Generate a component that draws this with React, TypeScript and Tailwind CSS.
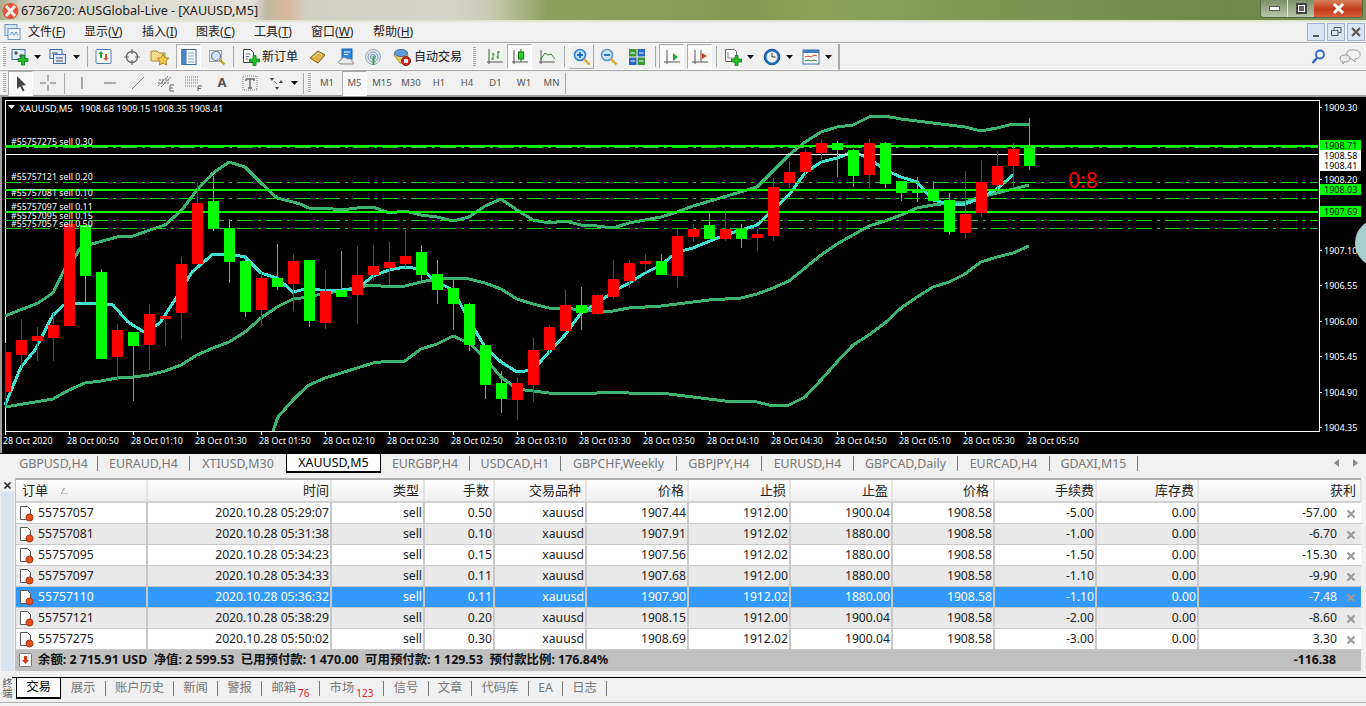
import type { ReactNode } from "react"

const C: [number, number, number, number, number][] = [
  [352, 392, 343, 406, 0], [340, 355, 319, 368, 0], [336, 341, 327, 361, 0], [325, 338, 313, 361, 0],
  [224, 326, 224, 326, 0], [225, 276, 225, 303, 1], [272, 359, 269, 359, 1], [330, 357, 324, 381, 0],
  [332, 346, 332, 401, 1], [314, 345, 304, 370, 0], [316, 319, 316, 346, 0], [264, 313, 257, 339, 0],
  [203, 264, 182, 264, 0], [201, 228, 176, 231, 1], [228, 262, 219, 283, 1], [261, 312, 255, 317, 1],
  [278, 310, 272, 326, 0], [278, 287, 244, 290, 1], [261, 284, 254, 311, 0], [260, 321, 260, 327, 1],
  [291, 323, 270, 329, 0], [290, 297, 251, 297, 1], [275, 295, 246, 324, 0], [266, 275, 245, 281, 0],
  [262, 268, 242, 285, 0], [256, 264, 230, 268, 0], [252, 275, 245, 282, 1], [274, 290, 260, 304, 1],
  [288, 304, 280, 330, 1], [304, 345, 303, 351, 1], [345, 385, 345, 399, 1], [383, 399, 371, 413, 1],
  [383, 400, 377, 420, 0], [350, 385, 338, 402, 0], [327, 350, 325, 355, 0], [305, 331, 290, 331, 0],
  [305, 313, 287, 330, 1], [295, 314, 294, 315, 0], [279, 297, 260, 299, 0], [263, 281, 260, 288, 0],
  [261, 264, 254, 272, 0], [261, 275, 254, 275, 1], [236, 276, 229, 288, 0], [229, 237, 224, 242, 0],
  [225, 239, 213, 239, 1], [229, 239, 210, 241, 0], [229, 239, 224, 248, 1], [234, 238, 229, 251, 0],
  [187, 236, 178, 241, 0], [172, 183, 161, 188, 0], [152, 172, 149, 178, 0], [143, 153, 139, 162, 0],
  [143, 150, 141, 177, 1], [150, 176, 149, 187, 1], [143, 175, 139, 190, 0], [143, 184, 142, 188, 1],
  [181, 193, 181, 201, 1], [190, 193, 177, 202, 1], [189, 201, 181, 201, 1], [200, 232, 193, 235, 1],
  [214, 233, 171, 239, 0], [182, 213, 160, 217, 0], [166, 185, 151, 190, 0], [149, 166, 143, 188, 0],
  [148, 166, 118, 170, 1],
]

const upper = "5,316 38,303 53,293 64,270 75,257 80,248 92,244 117,237 133,236 150,230 165,225 182,210 197,190 213,173 229,162 245,167 261,183 277,198 293,202 300,204 309,208 325,208 341,210 357,208 373,207 389,213 405,211 421,215 437,217 453,221 469,217 485,206 501,199 517,210 533,220 549,223 565,221 581,225 597,226 613,228 629,223 645,220 661,217 677,212 693,206 700,204 757,187 789,155 805,142 821,132 837,127 853,125 869,117 885,116 901,119 917,121 933,123 949,125 965,127 981,131 997,128 1013,124 1029,124"
const middle = "5,407 53,399 69,390 85,383 101,381 117,378 133,377 149,375 165,371 181,365 197,355 213,348 229,342 245,332 261,318 277,307 293,299 309,297 325,293 341,291 357,287 373,285 389,287 405,286 421,282 437,279 453,278 469,279 485,283 501,289 517,299 533,304 549,308 565,308 581,310 597,311 613,311 629,308 645,307 661,306 677,304 693,302 709,300 725,299 741,298 757,294 773,288 789,281 805,268 821,255 837,244 853,235 869,226 885,221 901,215 917,208 933,205 949,203 965,202 981,197 997,193 1013,189 1029,185"
const lower = "273,431 278,417 293,400 300,393 309,385 325,378 341,373 357,368 373,363 389,361 405,361 421,349 437,344 453,336 469,343 485,358 501,377 517,389 533,391 549,393 565,393 581,393 597,393 613,392 629,393 645,393 661,393 677,395 693,397 709,399 725,401 741,401 757,402 773,406 789,405 805,397 821,380 837,362 853,345 869,335 885,323 901,308 917,297 933,287 949,282 965,274 981,262 997,257 1013,253 1029,246"
const ma = "5,405 21,367 35,350 53,315 64,305 80,303 95,303 113,305 128,322 144,332 160,323 176,298 192,272 213,254 229,254 245,257 261,273 277,278 293,292 309,288 325,291 341,290 357,289 373,276 389,270 405,267 421,269 437,282 453,290 469,320 485,347 501,362 517,372 533,370 549,352 565,335 581,313 597,303 613,292 629,283 645,273 661,265 677,252 693,248 700,245 725,235 757,225 773,210 789,195 805,173 821,162 837,158 853,152 869,158 885,170 901,177 917,182 933,200 949,204 965,204 981,198 997,189 1013,175"

const times = ["28 Oct 2020", "28 Oct 00:50", "28 Oct 01:10", "28 Oct 01:30", "28 Oct 01:50", "28 Oct 02:10", "28 Oct 02:30", "28 Oct 02:50", "28 Oct 03:10", "28 Oct 03:30", "28 Oct 03:50", "28 Oct 04:10", "28 Oct 04:30", "28 Oct 04:50", "28 Oct 05:10", "28 Oct 05:30", "28 Oct 05:50"]
const axis: [string, number][] = [["1909.30", 111], ["1908.20", 183], ["1907.10", 254], ["1906.55", 289], ["1906.00", 325], ["1905.45", 360], ["1904.90", 396], ["1904.35", 431]]
const orderLabels: [string, number][] = [["#55757275 sell 0.30", 145], ["#55757121 sell 0.20", 180], ["#55757081 sell 0.10", 196], ["#55757097 sell 0.11", 210], ["#55757095 sell 0.15", 219], ["#55757057 sell 0.50", 227]]
const solid = [146, 190, 212]
const dashed = [147, 182, 198, 220, 228]
const greenBoxes: [string, number, number][] = [["1908.71", 140, 10], ["1908.03", 184, 11], ["1907.69", 206, 11]]

const Chart = () => (
  <svg width="1366" height="356" viewBox="0 97 1366 356" className="block shrink-0 bg-black" fontFamily="'Noto Sans', sans-serif" fontSize="8.9">
    <rect x="0" y="97" width="2" height="356" fill="#a0a0a0" />
    <rect x="5" y="100" width="1314" height="331.5" fill="none" stroke="#fff" strokeWidth="1" shapeRendering="crispEdges" />
    <g fill="none" strokeWidth="3" shapeRendering="crispEdges">
      <polyline points={upper} stroke="#3cb371" />
      <polyline points={middle} stroke="#3cb371" />
      <polyline points={lower} stroke="#3cb371" />
      <polyline points={ma} stroke="#40e0d0" />
    </g>
    <line x1="5" x2="1318" y1="154.5" y2="154.5" stroke="#fff" shapeRendering="crispEdges" />
    {solid.map((y) => (
      <rect key={y} x="5" y={y - 1} width="1313" height="2" fill="#00ff00" />
    ))}
    {dashed.map((y) => (
      <line key={y} x1="5" x2="1318" y1={y + 0.5} y2={y + 0.5} stroke="#1fd01f" strokeDasharray="16 5 3 5" shapeRendering="crispEdges" />
    ))}
    {C.map(([top, bottom, wickTop, wickBottom, up], i) => (
      <g key={i} shapeRendering="crispEdges" fill={up ? "#00ff00" : "#ff0000"}>
        <rect x={Math.max(16 * i + 5, 5)} y={wickTop} width="1" height={wickBottom - wickTop} />
        <rect x={Math.max(16 * i, 5)} y={top} width={i === 0 ? 6 : 11} height={bottom - top} />
      </g>
    ))}
    <path d="M8 105h7l-3.500 4z" fill="#fff" />
    <text x="19.500" y="111.500" fill="#fff" fontSize="9.400">XAUUSD,M5</text>
    <text x="80" y="111.500" fill="#fff" fontSize="9.200">1908.68 1909.15 1908.35 1908.41</text>
    {orderLabels.map(([t, y]) => (
      <text key={t} x="11" y={y} fill="#fff" fontSize="8.800">{t}</text>
    ))}
    <text x="1068" y="188" fill="#ff0000" fontSize="21">0:8</text>
    {times.map((t, i) => (
      <g key={t}>
        <line x1={5.500 + 64 * i} x2={5.500 + 64 * i} y1="431" y2="435" stroke="#fff" />
        <text x={3 + 64 * i} y="444" fill="#fff">{t}</text>
      </g>
    ))}
    {axis.map(([t, y]) => (
      <g key={t}>
        <line x1="1319" x2="1322" y1={y - 3.500} y2={y - 3.500} stroke="#fff" />
        <text x="1324" y={y} fill="#fff" fontSize="9">{t}</text>
      </g>
    ))}
    <rect x="1320" y="150" width="41" height="21" fill="#fff" />
    <text x="1324" y="159" fill="#000" fontSize="9">1908.58</text>
    <text x="1324" y="169" fill="#000" fontSize="9">1908.41</text>
    {greenBoxes.map(([t, y, h]) => (
      <g key={t}>
        <rect x="1320" y={y} width="41" height={h} fill="#00ff00" />
        <text x="1324" y={y + 8.500} fill="#000" fontSize="9">{t}</text>
      </g>
    ))}
    <circle cx="1379" cy="243" r="24" fill="#a6d0cc" />
  </svg>
)

const PlusMark = ({ x = 0, y = 0 }: { x?: number; y?: number }) => (
  <path transform={`translate(${x} ${y})`} d="M3.500 0h3v3.500h3.500v3h-3.500v3.500h-3v-3.500h-3.500v-3h3.500z" fill="#22c02a" stroke="#0b7a14" strokeWidth="0.800" />
)

const Ico = ({ children, w = 18, h = 18 }: { children: ReactNode; w?: number; h?: number }) => (
  <svg width={w} height={h} viewBox={`0 0 ${w} ${h}`}>{children}</svg>
)

const NewChartIcon = () => (
  <Ico>
    <rect x="1" y="1.500" width="13" height="10" fill="#e4eefa" stroke="#3f6ea8" />
    <path d="M3 5h4M5 3v4M8 8h4M10 6v4" stroke="#333" fill="none" />
    <PlusMark x={7} y={7} />
  </Ico>
)
const ProfileIcon = () => (
  <Ico>
    <rect x="1" y="1.500" width="12" height="9" fill="#e4eefa" stroke="#3f6ea8" />
    <rect x="4.500" y="6.500" width="12" height="9" fill="#dbe8f8" stroke="#3f6ea8" />
    <path d="M3 5h6M7 10h7M7 13h7" stroke="#555" />
  </Ico>
)
const ArrowsIcon = () => (
  <Ico>
    <rect x="1" y="1.500" width="15" height="14" rx="1" fill="#fff" stroke="#4a7fbb" />
    <path d="M5 10V6H3.500L6 3l2.500 3H7v4z" fill="#27a534" />
    <path d="M10 6v4H8.500l2.500 3 2.500-3H12V6z" fill="#e2502e" />
  </Ico>
)
const CrossCircleIcon = () => (
  <Ico>
    <circle cx="9" cy="9" r="5.500" fill="none" stroke="#666" strokeWidth="1.400" />
    <path d="M9 1v5M9 12v5M1 9h5M12 9h5" stroke="#666" strokeWidth="1.200" />
  </Ico>
)
const FolderStarIcon = () => (
  <Ico w={20}>
    <path d="M1 3h6l2 2h6v8H1z" fill="#f6dc8a" stroke="#a88a2c" />
    <path d="M13 6l1.800 3.600 4 .6-2.900 2.800.7 4-3.600-1.900-3.600 1.900.7-4-2.900-2.800 4-.6z" fill="#f5cc4a" stroke="#a8862c" />
  </Ico>
)
const NavigatorIcon = () => (
  <Ico>
    <rect x="2" y="1.500" width="14" height="15" fill="#fff" stroke="#3a6ca8" />
    <rect x="2" y="1.500" width="4" height="15" fill="#4d8ad0" stroke="#3a6ca8" />
    <path d="M8 5h6M8 8h6M8 11h6M8 14h6" stroke="#7aa0c8" />
  </Ico>
)
const DocSearchIcon = () => (
  <Ico>
    <rect x="1.500" y="2.500" width="12" height="11" fill="#eee" stroke="#9aa" />
    <circle cx="8" cy="8" r="4.500" fill="#cfe2f5" stroke="#778" strokeWidth="1.200" />
    <path d="M11.500 11.500l5 5" stroke="#c59a2e" strokeWidth="2.200" />
  </Ico>
)
const NewOrderIcon = () => (
  <Ico>
    <path d="M1.500 1.500h7l3 3v10h-10z" fill="#fff" stroke="#444" />
    <path d="M3.500 6h5M3.500 8.500h4M3.500 11h3" stroke="#777" />
    <PlusMark x={7.500} y={7.500} />
  </Ico>
)
const GoldIcon = () => (
  <Ico>
    <path d="M1 10l8-7 7 4-7 8z" fill="#e0b04a" stroke="#7a5a18" />
    <path d="M4 9l5-4 4 2" fill="none" stroke="#f6e2a4" />
  </Ico>
)
const CloudDocIcon = () => (
  <Ico>
    <rect x="4" y="1" width="10" height="10" fill="#2f86d8" stroke="#1a5fa8" />
    <path d="M6 4h6M6 6.500h4" stroke="#fff" />
    <path d="M3 16c-3 0-3-4 0-4 1-3 5-3 6-1 3-1 6 1 5 3 2 0 2 2 1 2z" fill="#e8e8e8" stroke="#888" />
  </Ico>
)
const SignalIcon = () => (
  <Ico>
    <circle cx="9" cy="9" r="7.500" fill="#dde8ee" stroke="#9ab" />
    <circle cx="9" cy="9" r="5" fill="none" stroke="#7a9ab8" />
    <circle cx="9" cy="9" r="2.500" fill="none" stroke="#6a8aa8" />
    <path d="M9.500 8v9" stroke="#3aa648" strokeWidth="2" />
  </Ico>
)
const AutoTradeIcon = () => (
  <Ico>
    <path d="M1 7c0-5 14-5 14 0l-6 8H7z" fill="#f3cf55" stroke="#a8862c" />
    <ellipse cx="8" cy="5" rx="6.500" ry="3.500" fill="#5f9bd6" stroke="#3a6ca8" />
    <circle cx="13" cy="13" r="4.500" fill="#d9261c" stroke="#8b1510" />
    <rect x="11" y="11" width="4" height="4" fill="#fff" />
  </Ico>
)
const BarChartIcon = () => (
  <Ico>
    <path d="M3 1v15M1 14h16" stroke="#555" />
    <path d="M7 5v7M5.500 11H7M7 6h1.500M12 3v8M10.500 9H12M12 4h1.500" stroke="#1e7a1e" fill="none" />
  </Ico>
)
const CandleChartIcon = () => (
  <Ico>
    <path d="M3 2v14M1 14h16" stroke="#555" />
    <path d="M10 1v13" stroke="#0a7a0a" />
    <rect x="7.500" y="4" width="5" height="7" fill="#22d322" stroke="#0a7a0a" />
  </Ico>
)
const LineChartIcon = () => (
  <Ico>
    <path d="M3 2v14M1 14h16" stroke="#555" />
    <path d="M3 11l4-6 3 2 3-1 4 5" stroke="#2a8a2a" fill="none" />
  </Ico>
)
const ZoomInIcon = () => (
  <Ico>
    <circle cx="7" cy="7" r="5.500" fill="#bfe0fa" stroke="#2d7fd0" strokeWidth="1.600" />
    <path d="M4 7h6M7 4v6" stroke="#1a6ac0" strokeWidth="1.800" />
    <path d="M11 11l5.500 5.500" stroke="#d8a832" strokeWidth="2.400" />
  </Ico>
)
const ZoomOutIcon = () => (
  <Ico>
    <circle cx="7" cy="7" r="5.500" fill="#cfe6f8" stroke="#5a96c8" strokeWidth="1.600" />
    <path d="M4 7h6" stroke="#1a6ac0" strokeWidth="1.800" />
    <path d="M11 11l5.500 5.500" stroke="#d8a832" strokeWidth="2.400" />
  </Ico>
)
const TileIcon = () => (
  <Ico>
    <rect x="1" y="1" width="7.500" height="7.500" fill="#3a9a34" />
    <rect x="9.500" y="1" width="7.500" height="7.500" fill="#2a66c8" />
    <rect x="1" y="9.500" width="7.500" height="7.500" fill="#2a66c8" />
    <rect x="9.500" y="9.500" width="7.500" height="7.500" fill="#3a9a34" />
    <path d="M2.500 5h4.500M11 5h4.500M2.500 13h4.500M11 13h4.500" stroke="#fff" />
  </Ico>
)
const ScrollIcon = () => (
  <Ico>
    <path d="M4 2v14M1 14h16" stroke="#555" />
    <path d="M10 5v8l5-4z" fill="#2aa52a" />
  </Ico>
)
const ShiftIcon = () => (
  <Ico>
    <path d="M4 2v14M1 14h16M10 2v12" stroke="#555" />
    <path d="M16 8l-5-3v6z" fill="#c8401e" />
  </Ico>
)
const IndicatorIcon = () => (
  <Ico>
    <path d="M1.500 1.500h9l2 2v10h-11z" fill="#fff" stroke="#666" />
    <path d="M4 4v6h6" stroke="#888" fill="none" />
    <PlusMark x={7.500} y={7.500} />
  </Ico>
)
const ClockIcon = () => (
  <Ico>
    <circle cx="9" cy="9" r="7.800" fill="#1d6fc4" stroke="#134f90" />
    <circle cx="9" cy="9" r="5.500" fill="#f0f0f0" />
    <path d="M9 5v4h3.500" stroke="#333" fill="none" />
  </Ico>
)
const TemplateIcon = () => (
  <Ico>
    <rect x="1" y="2" width="16" height="14" fill="#fff" stroke="#3a6ca8" />
    <rect x="1" y="2" width="16" height="3" fill="#3a7ac8" />
    <path d="M3 9l3-1 3 1 3-2 3 1" stroke="#c8401e" fill="none" />
    <path d="M3 13l3-1 3 1 3-1 3 1" stroke="#2a8a2a" fill="none" />
  </Ico>
)
const CursorIcon = () => (
  <Ico>
    <path d="M5 2l9 9-4 .5 2.500 5-1.800.8-2.500-5L5 15z" fill="#444" />
  </Ico>
)
const CrosshairIcon = () => (
  <Ico>
    <path d="M9 1v6M9 11v6M1 9h6M11 9h6" stroke="#666" />
  </Ico>
)
const VLineIcon = () => (
  <Ico>
    <path d="M9 3v12" stroke="#666" />
  </Ico>
)
const HLineIcon = () => (
  <Ico>
    <path d="M3 9h12" stroke="#666" />
  </Ico>
)
const TrendIcon = () => (
  <Ico>
    <path d="M3 15L15 3" stroke="#777" />
  </Ico>
)
const FibEIcon = () => (
  <Ico w={20}>
    <path d="M2 12L12 2M2 9h11M3 6h10M5 13L15 3" stroke="#666" strokeDasharray="2 1" fill="none" />
    <path d="M14 11h4M14 11v6M14 14h3M14 17h4" stroke="#666" fill="none" />
  </Ico>
)
const FibFIcon = () => (
  <Ico w={20}>
    <path d="M1 3h14M1 6h14M1 9h14M1 12h11" stroke="#777" strokeDasharray="1 1" />
    <path d="M14 12h4M14 12v5M14 14.500h3" stroke="#666" fill="none" />
  </Ico>
)
const TextTIcon = () => (
  <Ico>
    <rect x="2" y="2" width="14" height="14" fill="none" stroke="#777" strokeDasharray="1 1" />
    <path d="M5 5h8v2M5 5v2M9 5v9M7 14h4" stroke="#666" strokeWidth="1.400" fill="none" />
  </Ico>
)
const ArrowMarksIcon = () => (
  <Ico>
    <path d="M3 4h4l-2 3zM12 9h4l-2-3zM8 13h4l-2 3z" fill="#444" />
    <path d="M7 7l3 3" stroke="#666" />
  </Ico>
)
const SearchIcon = () => (
  <Ico w={14} h={16}>
    <circle cx="9" cy="5.500" r="4" fill="none" stroke="#2b62c8" strokeWidth="1.800" />
    <path d="M6 9l-4.500 5" stroke="#2b62c8" strokeWidth="2.400" />
  </Ico>
)
const ChatIcon = () => (
  <Ico w={22} h={16}>
    <path d="M8 3c1-3 12-3 13 1 1 4-2 6-5 6v3l-3-3c-3 0-6-3-5-7z" fill="#f1f1f1" stroke="#999" />
    <path d="M1 9c0-4 10-4 10 0s-4 4-6 4l-1 2v-2c-2 0-3-2-3-4z" fill="#e9e9e9" stroke="#999" />
  </Ico>
)
const MenuDocIcon = () => (
  <Ico>
    <rect x="1" y="1.500" width="12" height="11" fill="#d8e8f8" stroke="#6a94c8" />
    <rect x="4" y="5.500" width="12" height="11" fill="#eef5fc" stroke="#6a94c8" />
    <path d="M6 12l2-3 2 3 2-3 2 3" stroke="#5a8ac0" fill="none" />
  </Ico>
)
const OrderDocIcon = () => (
  <svg width="16" height="17" viewBox="0 0 16 17" className="shrink-0">
    <path d="M1.500 1.500h7l3 3v10h-10z" fill="#fff" stroke="#555" />
    <circle cx="10.500" cy="12.500" r="3.500" fill="#e2501c" stroke="#a83210" />
  </svg>
)

const Caret = () => (
  <svg width="7" height="4" viewBox="0 0 7 4">
    <path d="M0 0h7L3.500 4z" fill="#111" />
  </svg>
)

type CellKind = "none" | "active" | "raised"

const Cell = ({ className, kind = "none", children }: { className: string; kind?: CellKind; children?: ReactNode }) => (
  <div
    className={`flex h-[25px] shrink-0 items-center justify-center ${className} ${
      kind === "active"
        ? "border border-b-white border-l-[#ababab] border-r-white border-t-[#ababab] bg-[#f8f8f8]"
        : kind === "raised"
          ? "border border-b-[#a8a8a8] border-l-white border-r-[#a8a8a8] border-t-white"
          : ""
    }`}
  >
    {children}
  </div>
)

const Sep = ({ className }: { className: string }) => (
  <div className={`flex h-[25px] shrink-0 items-center justify-center ${className}`}>
    <div className="h-[21px] w-px bg-[#a8a8a8]" />
  </div>
)

const Grip = ({ className }: { className: string }) => (
  <div className={`flex h-[25px] shrink-0 items-center justify-center ${className}`}>
    <div className="h-[20px] w-[3px] bg-[repeating-linear-gradient(180deg,#a8a8a8_0,#a8a8a8_1px,#f0f0f0_1px,#f0f0f0_2px)]" />
  </div>
)

const TopBar = () => (
  <div className="flex h-[22px] shrink-0 items-start justify-between border-b-2 border-b-[#dfe5cf] bg-[linear-gradient(90deg,#a9ac86_0%,#d8d8cc_1.500%,#e2e1da_18.500%,#bfb9a5_19.500%,#dcb79a_21%,#cfcfc6_22.500%,#d4d4cc_33%,#c8c9b0_36%,#8fa05e_40%,#86984f_55%,#8ea258_60%,#7d9450_75%,#6f8748_90%,#7d8f58_100%)]">
    <div className="flex items-center">
      <svg width="18" height="18" viewBox="0 0 18 18" className="ml-[2px] mt-[1px]">
        <circle cx="8.500" cy="9" r="8" fill="#e2543e" />
        <path d="M4 4l9 10M13 4L4 14" stroke="#f5efe6" strokeWidth="3" />
      </svg>
      <span className="ml-[1px] mt-[2px] text-[12.600px] leading-[18px] text-[#1c1c1c]">6736720: AUSGlobal-Live - [XAUUSD,M5]</span>
    </div>
    <div className="mr-[3px] flex h-[18px] overflow-hidden rounded-b-[4px] border border-t-0 border-[#5a6a48]">
      <div className="flex w-[27px] items-center justify-center border-r border-[#e5e8da] bg-[linear-gradient(180deg,#7f8f68,#b8c4a8)]">
        <div className="h-[5px] w-[11px] border border-[#555] bg-white" />
      </div>
      <div className="flex w-[26px] items-center justify-center bg-[linear-gradient(180deg,#7f8f68,#b8c4a8)]">
        <div className="flex h-[11px] w-[11px] items-center justify-center border-2 border-[#444] bg-white">
          <div className="h-[5px] w-[5px] bg-[#666]" />
        </div>
      </div>
      <div className="flex w-[48px] items-center justify-center bg-[linear-gradient(180deg,#d9805a,#c23a1a_55%,#d8603a)]">
        <svg width="13" height="11" viewBox="0 0 13 11">
          <path d="M2 1l9 9M11 1l-9 9" stroke="#fff" strokeWidth="3" />
        </svg>
      </div>
    </div>
  </div>
)

const menus: [string, string, string][] = [
  ["文件", "F", "w-[56px]"],
  ["显示", "V", "w-[58px]"],
  ["插入", "I", "w-[54px]"],
  ["图表", "C", "w-[58px]"],
  ["工具", "T", "w-[57px]"],
  ["窗口", "W", "w-[62px]"],
  ["帮助", "H", "w-[60px]"],
]

const MenuBar = () => (
  <div className="flex h-[21px] shrink-0 items-center justify-between border-b border-b-[#a8a8a8] bg-[#f0f0f0]">
    <div className="flex items-center text-[12px] text-[#222]">
      <div className="flex w-[28px] items-center justify-center pr-[2px]">
        <MenuDocIcon />
      </div>
      {menus.map(([t, k, w]) => (
        <div key={t} className={`${w} shrink-0`}>
          {t}(<span className="underline">{k}</span>)
        </div>
      ))}
    </div>
    <div className="mr-[1px] flex gap-[2px]">
      {["min", "restore", "close"].map((b) => (
        <div key={b} className="flex h-[18px] w-[18px] items-center justify-center border border-[#9fb4cf] bg-[#d8e6f4]">
          <svg width="12" height="12" viewBox="0 0 12 12">
            {b === "min" && <path d="M3 10h6" stroke="#555" strokeWidth="2" />}
            {b === "restore" && <path d="M4 3.500V1.500h7v5H8.500M1.500 4.500h6.500v5H1.500z" fill="none" stroke="#555" />}
            {b === "close" && <path d="M2 2l8 8M10 2l-8 8" stroke="#555" strokeWidth="2" />}
          </svg>
        </div>
      ))}
    </div>
  </div>
)

const ToolbarOne = () => (
  <div className="flex h-[27px] shrink-0 items-center justify-between border-t border-t-white bg-[#f0f0f0]">
    <div className="flex h-[26px] items-center border-b border-r-2 border-b-white border-r-[#a8a8a8] bg-[#f0f0f0]">
      <Grip className="w-[8px]" />
      <Cell className="w-[24px]"><NewChartIcon /></Cell>
      <Cell className="w-[10px]"><Caret /></Cell>
      <div className="w-[4px]" />
      <Cell className="w-[24px]"><ProfileIcon /></Cell>
      <Cell className="w-[12px]"><Caret /></Cell>
      <Sep className="w-[10px]" />
      <Cell className="w-[24px]"><ArrowsIcon /></Cell>
      <Cell className="w-[32px]"><CrossCircleIcon /></Cell>
      <Cell className="w-[24px]"><FolderStarIcon /></Cell>
      <div className="w-[4px]" />
      <Cell className="w-[25px]" kind="active"><NavigatorIcon /></Cell>
      <div className="w-[4px]" />
      <Cell className="w-[24px]"><DocSearchIcon /></Cell>
      <Sep className="w-[8px]" />
      <Cell className="w-[65px] justify-start gap-[2px] pl-[5px] text-[12px] text-[#111]">
        <NewOrderIcon />
        <span className="shrink-0">新订单</span>
      </Cell>
      <Cell className="w-[31px]"><GoldIcon /></Cell>
      <Cell className="w-[28px]"><CloudDocIcon /></Cell>
      <Cell className="w-[24px]"><SignalIcon /></Cell>
      <Cell className="w-[81px] justify-start gap-[3px] pl-[8px] text-[12px] text-[#111]">
        <AutoTradeIcon />
        <span className="shrink-0">自动交易</span>
      </Cell>
      <div className="w-[4px]" />
      <Grip className="w-[8px]" />
      <div className="w-[5px]" />
      <Cell className="w-[24px]"><BarChartIcon /></Cell>
      <Cell className="w-[25px]" kind="active"><CandleChartIcon /></Cell>
      <Cell className="w-[30px]"><LineChartIcon /></Cell>
      <Sep className="w-[5px]" />
      <div className="w-[2px]" />
      <Cell className="w-[25px]" kind="raised"><ZoomInIcon /></Cell>
      <Cell className="w-[29px]"><ZoomOutIcon /></Cell>
      <Cell className="w-[28px]"><TileIcon /></Cell>
      <Sep className="w-[8px]" />
      <Cell className="w-[25px]" kind="active"><ScrollIcon /></Cell>
      <div className="w-[3px]" />
      <Cell className="w-[25px]" kind="active"><ShiftIcon /></Cell>
      <Sep className="w-[8px]" />
      <Cell className="w-[26px]"><IndicatorIcon /></Cell>
      <Cell className="w-[8px]"><Caret /></Cell>
      <div className="w-[9px]" />
      <Cell className="w-[18px]"><ClockIcon /></Cell>
      <Cell className="w-[16px]"><Caret /></Cell>
      <div className="w-[5px]" />
      <Cell className="w-[18px]"><TemplateIcon /></Cell>
      <Cell className="w-[16px]"><Caret /></Cell>
      <div className="w-[2px]" />
    </div>
    <div className="mr-[5px] flex items-center gap-[14px]">
      <SearchIcon />
      <ChatIcon />
    </div>
  </div>
)

const periods: [string, string, CellKind][] = [
  ["M1", "w-[30px]", "none"],
  ["M5", "w-[25px]", "active"],
  ["M15", "w-[30px]", "none"],
  ["M30", "w-[28px]", "none"],
  ["H1", "w-[28px]", "none"],
  ["H4", "w-[28px]", "none"],
  ["D1", "w-[29px]", "none"],
  ["W1", "w-[28px]", "none"],
  ["MN", "w-[27px]", "none"],
]

const ToolbarTwo = () => (
  <div className="flex h-[27px] shrink-0 items-center border-b-2 border-t border-b-[#9a9a9a] border-t-[#a8a8a8] bg-[#f0f0f0]">
    <Grip className="w-[8px]" />
    <Cell className="w-[25px]" kind="active"><CursorIcon /></Cell>
    <div className="w-[3px]" />
    <Cell className="w-[24px]"><CrosshairIcon /></Cell>
    <Sep className="w-[8px]" />
    <Cell className="w-[28px]"><VLineIcon /></Cell>
    <Cell className="w-[28px]"><HLineIcon /></Cell>
    <Cell className="w-[28px]"><TrendIcon /></Cell>
    <Cell className="w-[28px]"><FibEIcon /></Cell>
    <Cell className="w-[28px]"><FibFIcon /></Cell>
    <Cell className="w-[28px] text-[13px] font-bold text-[#555]">A</Cell>
    <Cell className="w-[28px]"><TextTIcon /></Cell>
    <Cell className="w-[24px]"><ArrowMarksIcon /></Cell>
    <Cell className="w-[12px]"><Caret /></Cell>
    <Sep className="w-[6px]" />
    <Grip className="w-[6px]" />
    {periods.map(([t, w, k]) => (
      <Cell key={t} className={`${w} text-[9.500px] text-[#555]`} kind={k}>{t}</Cell>
    ))}
    <Sep className="w-[1px]" />
  </div>
)

const chartTabs: [string, string][] = [
  ["GBPUSD,H4", "w-[88px]"],
  ["EURAUD,H4", "w-[92px]"],
  ["XTIUSD,M30", "w-[96px]"],
  ["XAUUSD,M5", "w-[95px]"],
  ["EURGBP,H4", "w-[89px]"],
  ["USDCAD,H1", "w-[91px]"],
  ["GBPCHF,Weekly", "w-[116px]"],
  ["GBPJPY,H4", "w-[85px]"],
  ["EURUSD,H4", "w-[92px]"],
  ["GBPCAD,Daily", "w-[104px]"],
  ["EURCAD,H4", "w-[92px]"],
  ["GDAXI,M15", "w-[88px]"],
]

const ChartTabs = () => (
  <div className="flex h-[21px] shrink-0 items-start justify-between border-t border-t-black bg-[#f0f0f0] pl-[2px]">
    <div className="flex h-[19px] items-center text-[12.400px] text-[#777]">
      <div className="w-[8px]" />
      {chartTabs.map(([t, w]) =>
        t === "XAUUSD,M5" ? (
          <div key={t} className={`${w} flex h-[19px] shrink-0 items-center justify-center border-x border-b-2 border-black bg-white pt-[1px] text-black`}>
            {t}
          </div>
        ) : (
          <div key={t} className={`${w} flex h-[15px] shrink-0 items-center justify-center pt-[1px] ${t === "XTIUSD,M30" ? "" : "border-r border-[#777]"}`}>
            {t}
          </div>
        ),
      )}
    </div>
    <div className="mr-[8px] mt-[5px] flex gap-[14px]">
      <svg width="5" height="8" viewBox="0 0 5 8"><path d="M5 0v8L0 4z" fill="#8a8a8a" /></svg>
      <svg width="5" height="8" viewBox="0 0 5 8"><path d="M0 0v8l5-4z" fill="#8a8a8a" /></svg>
    </div>
  </div>
)

const columns = "grid grid-cols-[132px_184px_93px_70px_92px_102px_102px_102px_102px_102px_102px_163px]"
const headers: [string, string][] = [
  ["时间", "pr-[1px]"],
  ["类型", "pr-[4px]"],
  ["手数", "pr-[4px]"],
  ["交易品种", "pr-[4px]"],
  ["价格", "pr-[3px]"],
  ["止损", "pr-[3px]"],
  ["止盈", "pr-[3px]"],
  ["价格", "pr-[4px]"],
  ["手续费", "pr-[1px]"],
  ["库存费", "pr-[3px]"],
  ["获利", "pr-[4px]"],
]

const rows = [
  ["55757057", "2020.10.28 05:29:07", "sell", "0.50", "xauusd", "1907.44", "1912.00", "1900.04", "1908.58", "-5.00", "0.00", "-57.00"],
  ["55757081", "2020.10.28 05:31:38", "sell", "0.10", "xauusd", "1907.91", "1912.02", "1880.00", "1908.58", "-1.00", "0.00", "-6.70"],
  ["55757095", "2020.10.28 05:34:23", "sell", "0.15", "xauusd", "1907.56", "1912.02", "1880.00", "1908.58", "-1.50", "0.00", "-15.30"],
  ["55757097", "2020.10.28 05:34:33", "sell", "0.11", "xauusd", "1907.68", "1912.00", "1880.00", "1908.58", "-1.10", "0.00", "-9.90"],
  ["55757110", "2020.10.28 05:36:32", "sell", "0.11", "xauusd", "1907.90", "1912.02", "1880.00", "1908.58", "-1.10", "0.00", "-7.48"],
  ["55757121", "2020.10.28 05:38:29", "sell", "0.20", "xauusd", "1908.15", "1912.00", "1900.04", "1908.58", "-2.00", "0.00", "-8.60"],
  ["55757275", "2020.10.28 05:50:02", "sell", "0.30", "xauusd", "1908.69", "1912.02", "1900.04", "1908.58", "-3.00", "0.00", "3.30"],
]

const rowColors = ["bg-white text-[#222]", "bg-[#e9e9e9] text-[#222]", "bg-white text-[#222]", "bg-[#e9e9e9] text-[#222]", "bg-[#3399ff] text-white", "bg-[#e9e9e9] text-[#222]", "bg-white text-[#222]"]

const OrderTable = () => (
  <div className="w-[1346px] border-l border-l-[#c0c0c0] text-[12.200px]">
    <div className={`${columns} h-[25px] border-b-2 border-t-2 border-b-[#d0d0d0] border-t-[#b0b0b0] bg-[linear-gradient(180deg,#fdfdfd,#f0f0f0)] text-[13px] text-[#222]`}>
      <div className="flex items-center border-r-2 border-r-[#e4e4e4] pl-[6px]">
        订单
        <svg width="7" height="6" viewBox="0 0 7 6" className="ml-[13px]">
          <path d="M3.500 0L0 6h7" fill="none" stroke="#999" />
        </svg>
      </div>
      {headers.map(([h, pad], i) => (
        <div key={i} className={`flex items-center justify-end border-r-2 border-r-[#e4e4e4] ${pad}`}>{h}</div>
      ))}
    </div>
    {rows.map((r, i) => (
      <div key={r[0]} className={`${columns} h-[21px] ${rowColors[i]}`}>
        <div className="flex items-center gap-[3px] border-b border-r-2 border-b-[#c8c8c8] border-r-[#c8c8c8] pl-[3px] pt-[1px]">
          <OrderDocIcon />
          <span>{r[0]}</span>
        </div>
        {r.slice(1, 11).map((v, j) => (
          <div key={j} className="flex items-center justify-end border-b border-r-2 border-b-[#c8c8c8] border-r-[#c8c8c8] pr-[1px] pt-[1px]">{v}</div>
        ))}
        <div className="flex items-center justify-end border-b border-b-[#c8c8c8] pr-[6px] pt-[1px]">
          <span>{r[11]}</span>
          <svg width="10" height="10" viewBox="0 0 10 10" className="ml-[9px]">
            <path d="M1.500 1.500l7 7M8.500 1.500l-7 7" stroke="#9a9a9a" strokeWidth="2.200" />
          </svg>
        </div>
      </div>
    ))}
    <div className="flex h-[21px] items-center justify-between bg-[#c0c0c0] font-bold text-[#111]">
      <div className="flex items-center gap-[6px] whitespace-pre pl-[3px] text-[12.400px]">
        <svg width="13" height="14" viewBox="0 0 13 14">
          <rect x="0.500" y="0.500" width="12" height="13" rx="1" fill="#f5f5f5" stroke="#777" />
          <path d="M5 3h3v4h2l-3.500 4L3 7h2z" fill="#d23a1c" />
        </svg>
        <span>余额: 2 715.91 USD  净值: 2 599.53  已用预付款: 1 470.00  可用预付款: 1 129.53  预付款比例: 176.84%</span>
      </div>
      <span className="pr-[25px]">-116.38</span>
    </div>
  </div>
)

const bottomTabs: [string, string, string][] = [
  ["展示", "", "w-[45px]"],
  ["账户历史", "", "w-[68px]"],
  ["新闻", "", "w-[44px]"],
  ["警报", "", "w-[44px]"],
  ["邮箱", "76", "w-[58px]"],
  ["市场", "123", "w-[64px]"],
  ["信号", "", "w-[45px]"],
  ["文章", "", "w-[43px]"],
  ["代码库", "", "w-[57px]"],
  ["EA", "", "w-[34px]"],
  ["日志", "", "w-[44px]"],
]

const BottomTabs = () => (
  <div className="h-[35px] shrink-0 bg-[#f0f0f0]">
    <div className="flex h-[32px] items-start border-b border-b-[#b0b0b0]">
      <div className="mt-[6px] flex h-[21px] w-[12px] shrink-0 items-center justify-center pl-[2px] [writing-mode:vertical-rl] text-[10px] leading-[10px] text-[#555]">终端</div>
      <div className="mt-[6px] flex h-[22px] flex-1 border-t border-t-black">
        <div className="-mt-px ml-[4px] flex h-[22px] w-[45px] shrink-0 items-center justify-center border-x border-b-2 border-t border-black bg-white text-[12.300px] text-black">交易</div>
        <div className="flex h-[21px] items-center text-[12.300px] text-[#777]">
          {bottomTabs.map(([t, n, w]) => (
            <div key={t} className={`${w} flex h-[15px] shrink-0 items-center justify-center border-r border-[#777]`}>
              <span>{t}</span>
              {n && <span className="ml-[2px] mt-[8px] text-[10px] leading-[10px] text-[#e0202a]">{n}</span>}
            </div>
          ))}
        </div>
      </div>
    </div>
  </div>
)

export default function App() {
  return (
    <div className="flex h-[706px] w-[1366px] flex-col overflow-hidden bg-[#f0f0f0] font-['Noto_Sans','Noto_Sans_CJK_SC',sans-serif]">
      <TopBar />
      <MenuBar />
      <ToolbarOne />
      <ToolbarTwo />
      <Chart />
      <ChartTabs />
      <div className="flex h-[197px] shrink-0 pt-[4px]">
        <div className="flex w-[15px] shrink-0 flex-col items-center">
          <svg width="9" height="9" viewBox="0 0 9 9" className="mt-[3px]">
            <path d="M1.500 1.500l6 6M7.500 1.500l-6 6" stroke="#222" strokeWidth="1.600" />
          </svg>
          <div className="mt-[2px] h-[180px] w-[13px] bg-[#d8e5f1]" />
        </div>
        <OrderTable />
      </div>
      <BottomTabs />
    </div>
  )
}
